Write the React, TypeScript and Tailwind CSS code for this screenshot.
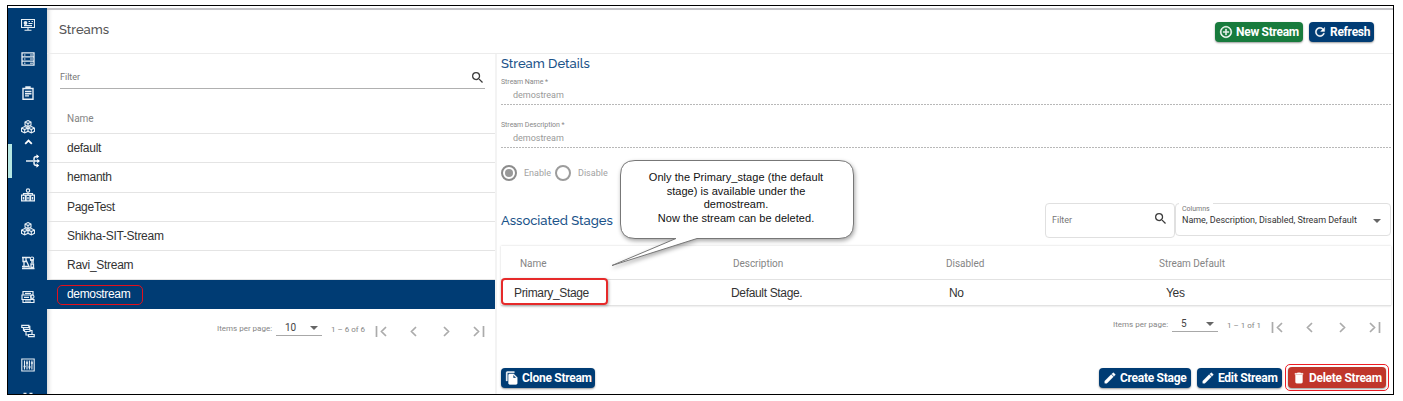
import React from "react";

const roboto = "font-['Roboto',sans-serif]";
const arial = "font-['Liberation_Sans',Arial,sans-serif]";
const heading = "font-['Raleway','Lato',sans-serif]";

function Icon({ children, className = "" }: { children: React.ReactNode; className?: string }) {
  return (
    <svg
      viewBox="0 0 14 14"
      className={"h-[14px] w-[14px] shrink-0 " + className}
      fill="none"
      stroke="#e8eff5"
      strokeWidth="1.1"
    >
      {children}
    </svg>
  );
}

const Cubes = () => (
  <Icon>
    <path d="M7 .6l3 1.500v3L7 6.700 4 5.100v-3zM4 2.100l3 1.500 3-1.500M7 3.600v3M3.700 6.500l3.200 1.500v3.300l-3.200 1.600-3.200-1.600V8zM.5 8l3.200 1.600L6.900 8M3.700 9.600v3.300M10.300 6.500l3.200 1.500v3.300l-3.200 1.600-3.200-1.600V8zM7.100 8l3.200 1.600L13.500 8M10.300 9.600v3.300" />
  </Icon>
);

function Sidebar() {
  return (
    <nav className="relative h-[386px] w-[39px] shrink-0 overflow-hidden bg-[#003c74]">
      <div className="flex flex-col items-center gap-5 pt-[10px]">
        <Icon>
          <path d="M.5 1.500h13v8H.5zM7 9.500V12M3.500 12.300h7" />
          <circle cx="4.500" cy="5" r="1.900" fill="#e8eff5" stroke="none" />
          <path d="M7.500 3.500h1.500M10.500 3.500h1.500M7.500 5.500h4M3 7.700h8" strokeWidth="1.200" />
        </Icon>
        <Icon>
          <path d="M1 .8h12v12.400H1zM1 4.900h12M1 9.100h12" strokeWidth="1.300" />
          <path d="M3 3h1.500M9 3h3M3 7h1.500M9 7h3M3 11.200h1.500M9 11.200h3" strokeWidth="1" />
        </Icon>
        <Icon>
          <path d="M2 2.500h10v10.700H2zM5 2.500V1h4v1.500M4 5.500h6.500M4 7.700h6.500M4 9.900h4" strokeWidth="1.400" />
        </Icon>
        <Cubes />
        <Icon className="translate-x-[5px]">
          <path d="M0 7h7M11.500 2.500h-1Q8 2.500 8 5v4q0 2.500 2.500 2.500h1M8 7h4" strokeWidth="1.500" />
          <path d="M10.500 .3l2.700 2.200-2.700 2.200zM11.300 4.800L14 7l-2.700 2.200zM10.500 9.300l2.700 2.200-2.700 2.200z" fill="#fff" stroke="none" />
        </Icon>
        <Icon>
          <circle cx="7" cy="2.600" r="1.700" />
          <path d="M7 4.500V8M2.500 7V5.500h9V7M.6 7.200h3.800v5.600H.6zM5.100 7.200h3.800v5.600H5.100zM9.600 7.200h3.800v5.600H9.600z" strokeWidth="1.200" />
          <path d="M2.500 9v2.500M7 9v2.500M11.500 9v2.500" strokeWidth="1.300" />
        </Icon>
        <Cubes />
        <Icon>
          <path d="M1 1.500h8M2 1.500v4h3v-4M5 4l3.500 7.500M3 5.500v6M9 4h4M1 12.500h12.500M1 10.500h7M10 8h2.500v3.500H10zM10 6h3" strokeWidth="1.300" />
          <circle cx="11" cy="2.700" r="1.700" />
        </Icon>
        <Icon>
          <path d="M2 1.500h10v3.500H2zM1 5h9v4.500H1zM2 9.500h11v3H2zM4 3.300h6M3 7.300h5M4 11h6" strokeWidth="1.200" />
          <circle cx="11.300" cy="6.700" r="1.700" />
        </Icon>
        <Icon>
          <path d="M.8 1.300h7v2.200h-7zM3.500 5.300h5.500v2.200H3.500zM7.500 10.500h5.700v2.200H7.500zM7.800 2.300h1v3M2.500 3.500v3h1M5 7.500v3.500h2.500M9 6.500h2v4" strokeWidth="1.200" />
        </Icon>
        <Icon>
          <path d="M.8 1h12.400v12H.8zM3.500 2.500v9M6 2.500v9M8.400 2.500v9M10.900 2.500v9" />
          <path d="M2.600 8.500h2M5 5h2M7.500 9h2M9.900 5h2" strokeWidth="1.500" />
        </Icon>
        <Icon>
          <path d="M2.500 1.500h3M8.500 1.500h3" strokeWidth="1.500" />
        </Icon>
      </div>
      <svg viewBox="0 0 9 6" className="absolute left-[16px] top-[131px] h-[6px] w-[9px]" fill="none" stroke="#fff" strokeWidth="1.800">
        <path d="M1.200 4.800l3.300-3.200 3.300 3.200" />
      </svg>
      <div className="absolute left-0 top-[136px] h-[34px] w-[4px] bg-[#b6e8e4]" />
    </nav>
  );
}

function Search({ className = "" }: { className?: string }) {
  return (
    <svg viewBox="3 3 17.500 17.500" className={"h-[11px] w-[11px] shrink-0 " + className} fill="#3c3c3c">
      <path d="M15.500 14h-.79l-.28-.27A6.471 6.471 0 0 0 16 9.500 6.500 6.500 0 1 0 9.500 16c1.610 0 3.090-.59 4.230-1.570l.27.28v.79l5 4.990L20.490 19l-4.990-5zm-6 0C7.010 14 5 11.990 5 9.500S7.010 5 9.500 5 14 7.010 14 9.500 11.990 14 9.500 14z" />
    </svg>
  );
}

const glyphs = {
  add: "M13 7h-2v4H7v2h4v4h2v-4h4v-2h-4V7zm-1-5C6.480 2 2 6.480 2 12s4.480 10 10 10 10-4.480 10-10S17.520 2 12 2zm0 18c-4.410 0-8-3.590-8-8s3.590-8 8-8 8 3.590 8 8-3.590 8-8 8z",
  refresh:
    "M17.650 6.350A7.958 7.958 0 0 0 12 4c-4.420 0-7.990 3.580-7.990 8s3.570 8 7.990 8c3.730 0 6.840-2.550 7.730-6h-2.080A5.990 5.990 0 0 1 12 18c-3.310 0-6-2.690-6-6s2.690-6 6-6c1.660 0 3.140.69 4.220 1.780L13 11h7V4l-2.350 2.350z",
  copy: "M16 1H4c-1.100 0-2 .9-2 2v14h2V3h12V1zm-1 4 6 6v10c0 1.100-.9 2-2 2H7.990C6.890 23 6 22.100 6 21l.010-14c0-1.100.89-2 1.990-2h7zm-1 7h5.500L14 6.500V12z",
  edit: "M3 17.250V21h3.750L17.810 9.940l-3.750-3.750L3 17.250zM20.710 7.040a.996.996 0 0 0 0-1.410l-2.340-2.340a.996.996 0 0 0-1.410 0l-1.830 1.830 3.750 3.750 1.830-1.830z",
  trash: "M6 19c0 1.100.9 2 2 2h8c1.100 0 2-.9 2-2V7H6v12zM19 4h-3.500l-1-1h-5l-1 1H5v2h14V4z",
};

function Button({ icon, label, className }: { icon: keyof typeof glyphs; label: string; className: string }) {
  return (
    <button
      className={`flex items-center gap-[3px] whitespace-nowrap rounded-[4px] pl-[4px] text-[12px] font-bold leading-none tracking-[-0.280px] text-white shadow-[0_1px_2px_rgba(0,0,0,0.4)] ${roboto} ${className}`}
    >
      <svg viewBox="0 0 24 24" className="h-[14px] w-[14px] shrink-0" fill="white" stroke="white" strokeWidth="0.600">
        <path d={glyphs[icon]} />
      </svg>
      <span>{label}</span>
    </button>
  );
}

function Paginator({ size, range, className }: { size: string; range: string; className: string }) {
  return (
    <div className={`flex h-[24px] whitespace-nowrap text-[8px] text-[#858585] ${roboto} ${className}`}>
      <span className="w-[59px] shrink-0 pt-[7px] leading-[12px]">Items per page:</span>
      <span className="flex h-[20px] w-[46px] shrink-0 items-center justify-between border-b border-[#a8a8a8] pl-[9px] pr-[4px] pt-[5px] text-[10px] leading-[14px] text-[#444]">
        {size}
        <svg viewBox="0 0 8 4" className="h-[4px] w-[8px]" fill="#666">
          <path d="M0 0h8L4 4z" />
        </svg>
      </span>
      <span className="w-[53px] shrink-0 pl-[9px] pt-[8px] leading-[12px]">{range}</span>
      <svg viewBox="0 0 110 12" className="mt-[9px] h-[12px] w-[110px] shrink-0" fill="none" stroke="#ababab" strokeWidth="1.700">
        <path d="M1.500 1v11M11 2L6.500 6.500 11 11M41 2l-4.500 4.500L41 11M69 2l4.500 4.500L69 11M99 2l4.500 4.500L99 11M108.500 1v11" />
      </svg>
    </div>
  );
}

const streams = ["default", "hemanth", "PageTest", "Shikha-SIT-Stream", "Ravi_Stream"];

function StreamList() {
  return (
    <section className="h-[340px] w-[448px] shrink-0">
      <div className="ml-[13px] flex h-[35px] w-[425px] justify-between border-b border-[#b0b0b0]">
        <span className={`pt-[17px] text-[9px] leading-[12px] text-[#777] ${roboto}`}>Filter</span>
        <Search className="mr-[2px] mt-[18px]" />
      </div>
      <div className={`text-[12px] tracking-[-0.280px] text-[#333] ${arial}`}>
        <div className={`flex h-[45px] items-center border-b border-[#e4e4e4] pl-[20px] pt-[14px] text-[10px] tracking-normal text-[#858585] ${roboto}`}>
          Name
        </div>
        {streams.map((s) => (
          <div key={s} className="flex h-[29.300px] items-center border-b border-[#e4e4e4] pl-[20px]">
            {s}
          </div>
        ))}
        <div className="flex h-[29px] items-center bg-[#003c74] pl-[10px] text-white">
          <span className="flex h-[20px] w-[86px] items-center rounded-[5px] border border-[#e3101c] pb-[1px] pl-[9px] tracking-[-0.340px]">
            demostream
          </span>
        </div>
      </div>
      <Paginator size="10" range="1 – 6 of 6" className="ml-[170px] mt-[7px]" />
    </section>
  );
}

function Field({ label, value }: { label: string; value: string }) {
  return (
    <div className={`h-[43px] ${roboto}`}>
      <div className="h-[10px] text-[7px] leading-[10px] tracking-[-0.040px] text-[#888]">{label}</div>
      <div className="mt-[3px] h-[15px] pl-[12px] text-[9px] leading-[10px] tracking-[-0.020px] text-[#999]">{value}</div>
      <div className="-mt-px h-px w-[890px] bg-[repeating-linear-gradient(90deg,#b8b8b8_0_2px,transparent_2px_3px)]" />
    </div>
  );
}

function StreamDetails() {
  return (
    <section className="h-[340px] w-[898px] border-l-2 border-[#f3f3f3] pl-[4px]">
      <h2 className={`h-[23px] pt-[1px] text-[13px] font-medium leading-[18px] text-[#1b5389] ${heading}`}>Stream Details</h2>
      <Field label="Stream Name *" value="demostream" />
      <Field label="Stream Description *" value="demostream" />
      <div className={`flex h-[20px] items-center text-[9px] text-[#a2a2a2] ${roboto}`}>
        <span className="flex h-[16px] w-[16px] items-center justify-center rounded-full border-2 border-[#8c8c8c]">
          <span className="h-[8px] w-[8px] rounded-full bg-[#999]" />
        </span>
        <span className="w-[38px] pl-[7px] pt-[1px]">Enable</span>
        <span className="h-[16px] w-[16px] rounded-full border-2 border-[#9c9c9c]" />
        <span className="pl-[7px] pt-[1px]">Disable</span>
      </div>
      <div className="mt-[20px] flex h-[42px] pr-[2px]">
        <h2 className={`w-[544px] pt-[9px] text-[13px] font-medium leading-[18px] text-[#1b5389] ${heading}`}>Associated Stages</h2>
        <div className={`flex h-[35px] w-[130px] items-center justify-between rounded-[4px] border border-[#e0e0e0] pl-[6px] pr-[8px] text-[9px] text-[#777] ${roboto}`}>
          Filter
          <Search className="-mt-[5px]" />
        </div>
        <div className={`relative flex h-[33px] w-[216px] items-center justify-between rounded-[4px] border border-[#e0e0e0] pl-[6px] pr-[9px] pt-[2px] text-[9px] text-[#333] ${roboto}`}>
          <span className="absolute left-[3px] top-[-2px] w-[34px] bg-white pl-[3px] pt-[3px] text-[7px] leading-[9px] text-[#777]">
            Columns
          </span>
          <span className="whitespace-nowrap tracking-[-0.030px]">Name, Description, Disabled, Stream Default</span>
          <svg viewBox="0 0 8 4" className="h-[4px] w-[8px]" fill="#666">
            <path d="M0 0h8L4 4z" />
          </svg>
        </div>
      </div>
      <div className="mt-px w-[890px] shadow-[0_0_2px_rgba(0,0,0,0.180)]">
        <div className={`grid h-[34px] grid-cols-[213px_213px_213px_1fr] items-center border-b border-[#e2e2e2] pl-[19px] pt-[1px] text-[10px] tracking-[-0.040px] text-[#858585] ${roboto}`}>
          <span>Name</span>
          <span>Description</span>
          <span>Disabled</span>
          <span>Stream Default</span>
        </div>
        <div className={`grid h-[26px] grid-cols-[230px_218px_217px_1fr] items-center border-b border-[#e2e2e2] text-[12px] tracking-[-0.340px] text-[#333] ${arial}`}>
          <span className="-mb-[1px] -mt-[3px] flex h-[27px] w-[107px] items-center rounded-[4px] border-2 border-[#e62a2a] pl-[11px] pt-[2px] shadow-[1px_1px_3px_rgba(0,0,0,0.300)]">
            Primary_Stage
          </span>
          <span>Default Stage.</span>
          <span>No</span>
          <span>Yes</span>
        </div>
      </div>
      <Paginator size="5" range="1 – 1 of 1" className="ml-[612px] mt-[6px]" />
      <div className="mt-[32px] flex w-[890px] items-start">
        <Button icon="copy" label="Clone Stream" className="h-[20px] w-[94px] bg-[#003c74]" />
        <Button icon="edit" label="Create Stage" className="ml-auto h-[20px] w-[92px] bg-[#003c74]" />
        <Button icon="edit" label="Edit Stream" className="ml-[6px] h-[20px] w-[85px] bg-[#003c74]" />
        <div className="-mt-[4px] ml-[3px] mr-[2px] rounded-[5px] border-[1.500px] border-[#ee1c24] p-[2px]">
          <Button icon="trash" label="Delete Stream" className="h-[21px] w-[98px] bg-[#c0362b]" />
        </div>
      </div>
    </section>
  );
}

function Callout() {
  return (
    <div className="absolute left-[610px] top-[158px] h-[112px] w-[250px]">
      <svg viewBox="0 0 250 112" className="absolute inset-0 h-[112px] w-[250px] drop-shadow-[1px_2px_2px_rgba(0,0,0,0.350)]">
        <path
          d="M25 2.500H229Q243.500 2.500 243.500 17V66Q243.500 80.500 229 80.500H87L2 107.500 66 80.500H25Q10.500 80.500 10.500 66V17Q10.500 2.500 25 2.500z"
          fill="#fff"
          stroke="#777"
          strokeWidth="1"
        />
      </svg>
      <p className={`relative ml-[10px] w-[232px] whitespace-nowrap pt-[13px] text-center text-[11px] leading-[13.500px] tracking-[0.040px] text-[#111] ${arial}`}>
        Only the Primary_stage (the default
        <br />
        stage) is available under the
        <br />
        demostream.
        <br />
        Now the stream can be deleted.
      </p>
    </div>
  );
}

export default function App() {
  return (
    <div className="relative h-[401px] w-[1403px] overflow-hidden bg-white pl-[7px] pt-[5px]">
      <div className="h-[390px] w-[1387px] overflow-hidden border border-black pt-[2px]">
        <div className="flex">
          <Sidebar />
          <main className="h-[386px] w-[1346px] overflow-hidden border-t-2 border-[#c2c2c6] shadow-[inset_5px_0_5px_-4px_rgba(0,0,0,0.200)]">
            <header className="flex h-[44px] items-start border-b border-[#ececec] pl-[12px]">
              <h1 className={`pt-[11px] text-[13px] font-medium leading-[18px] text-[#555] ${heading}`}>Streams</h1>
              <Button icon="add" label="New Stream" className="ml-auto mt-[12px] h-[20px] w-[88px] bg-[#187b3d]" />
              <Button icon="refresh" label="Refresh" className="ml-[6px] mr-[19px] mt-[12px] h-[20px] w-[65px] bg-[#003c74]" />
            </header>
            <div className="flex">
              <StreamList />
              <StreamDetails />
            </div>
          </main>
        </div>
      </div>
      <Callout />
    </div>
  );
}
